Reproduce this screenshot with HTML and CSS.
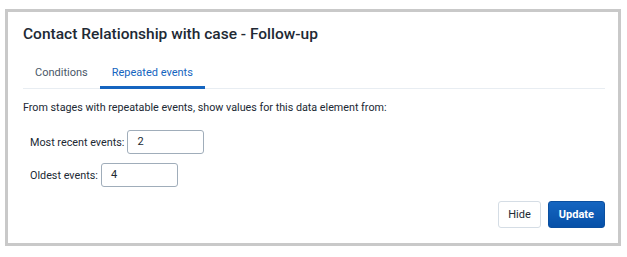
FILE: index.html
```html
<!DOCTYPE html>
<html>
<head>
<meta charset="utf-8">
<link rel="stylesheet" href="styles.css">
</head>
<body>
<div class="modal">
  <h1 class="title">Contact Relationship with case - Follow-up</h1>
  <div class="tabs">
    <div class="tab">Conditions</div>
    <div class="tab active">Repeated events</div>
  </div>
  <p class="desc">From stages with repeatable events, show values for this data element from:</p>
  <div class="field">
    <label class="label">Most recent events:</label>
    <div class="input">2</div>
  </div>
  <div class="field">
    <label class="label">Oldest events:</label>
    <div class="input">4</div>
  </div>
  <div class="actions">
    <button class="btn">Hide</button>
    <button class="btn primary">Update</button>
  </div>
</div>
</body>
</html>
```
FILE: styles.css
```css
html, body {
  margin: 0;
  padding: 0;
  background: #fff;
  font-family: Roboto, "Noto Sans", sans-serif;
  color: #212934;
}
.modal {
  margin: 9px 0 0 5px;
  width: 616px;
  height: 237px;
  box-sizing: border-box;
  border: 3px solid #c9c9c9;
  padding: 12px 13px 0 15px;
  display: flex;
  flex-direction: column;
}
.title {
  margin: 0;
  font-size: 15.5px;
  font-weight: 500;
  line-height: 20px;
  color: #212934;
}
.tabs {
  display: flex;
  margin-top: 14px;
  border-bottom: 1px solid #e8edf2;
}
.tab {
  font-size: 11px;
  line-height: 14px;
  color: #4a5768;
  padding: 8px 12px 6px;
  border-bottom: 3px solid transparent;
  margin-bottom: -1px;
}
.tab.active {
  color: #1565c0;
  border-bottom-color: #1565c0;
}
.desc {
  margin: 12px 0 0;
  font-size: 10.75px;
  line-height: 14px;
  color: #212934;
}
.field {
  display: flex;
  align-items: center;
  margin: 15px 0 0 7px;
}
.field + .field {
  margin-top: 9px;
}
.label {
  font-size: 10.8px;
  color: #212934;
  margin-right: 3px;
}
.input {
  width: 77px;
  height: 24px;
  box-sizing: border-box;
  border: 1px solid #a0adba;
  border-radius: 3px;
  font-size: 11px;
  line-height: 22px;
  padding-left: 9px;
  color: #212934;
}
.actions {
  display: flex;
  justify-content: flex-end;
  gap: 7px;
  margin-top: 14px;
}
.btn {
  height: 27px;
  box-sizing: border-box;
  font-family: Roboto, sans-serif;
  font-size: 11px;
  border-radius: 3px;
  border: 1px solid #d5dde5;
  background: #fff;
  color: #212934;
  padding: 0 9px;
}
.btn.primary {
  background: linear-gradient(180deg, #1565c0 0%, #0650a8 100%);
  border-color: #0b4f9f;
  color: #fff;
  font-weight: 700;
  padding: 0 10px;
}
```
